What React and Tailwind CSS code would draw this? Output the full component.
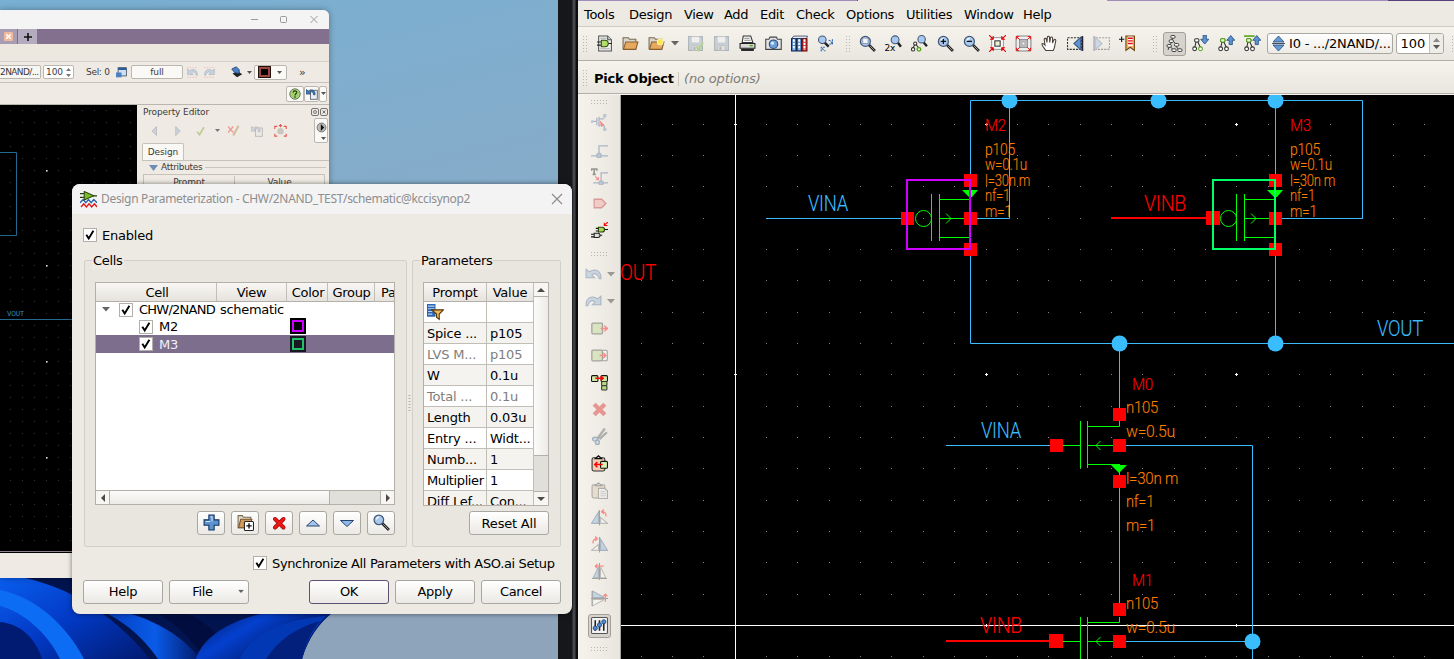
import React from "react";

/* ---------- small shared pieces ---------- */

function Ic({ children, size = 17, dim = false }) {
  return (
    <svg width={size} height={size} viewBox="0 0 16 16" className={dim ? "block shrink-0 opacity-40" : "block shrink-0"}>
      {children}
    </svg>
  );
}

function Cell({ children }) {
  return <div className="flex w-[26px] shrink-0 items-center justify-center">{children}</div>;
}

function Caret({ className = "" }) {
  return (
    <svg width="8" height="5" viewBox="0 0 8 5" className={"block shrink-0 " + className}>
      <path d="M0 0h8L4 4.6z" fill="#666462" />
    </svg>
  );
}

function Grip({ cols, rows }) {
  const dots = [];
  for (let c = 0; c < cols; c++)
    for (let r = 0; r < rows; r++) dots.push(<rect key={c + "-" + r} x={c * 3} y={r * 3} width="1" height="1" fill="#b9b6ae" />);
  return (
    <svg width={cols * 3 - 2} height={rows * 3 - 2} className="block shrink-0">
      {dots}
    </svg>
  );
}

function Check() {
  return (
    <span className="flex h-[14px] w-[14px] shrink-0 items-center justify-center border border-[#b3b0aa] bg-white">
      <svg width="12" height="12" viewBox="0 0 12 12">
        <path d="M2.3 5.8l2.4 3.6L9.4 1.8" fill="none" stroke="#000" strokeWidth="1.9" />
      </svg>
    </span>
  );
}

const glass = (x, y, r) => (
  <>
    <path d={`M${x + r * 0.7} ${y + r * 0.7}L15 15`} stroke="#222" strokeWidth="2.6" />
    <path d={`M${x + r * 0.7 + 1} ${y + r * 0.7 + 1}L14.6 14.6`} stroke="#aaa" strokeWidth="0.8" />
    <circle cx={x} cy={y} r={r} fill="#a9c8ec" stroke="#44597a" strokeWidth="1.2" />
    <path d={`M${x - r * 0.5} ${y - r * 0.1}a${r * 0.6} ${r * 0.6} 0 0 1 ${r * 0.6} -${r * 0.5}`} stroke="#fff" strokeWidth="1" fill="none" />
  </>
);

const tree = (leaf = "#333") => (
  <g fill="#fff" stroke="#333" strokeWidth="1">
    <path d="M4 5.5L2.5 12M5 5.5L8 12" fill="none" />
    <rect x="2.5" y="3.5" width="4" height="3" rx="1" />
    <circle cx="2.5" cy="13" r="1.8" />
    <circle cx="8" cy="13" r="1.8" stroke={leaf} />
  </g>
);

const folder = (
  <>
    <path d="M1 2.5h5l1 1.5h6v9H1z" fill="#d8d4cc" stroke="#7b6a50" />
    <path d="M3.5 6.5H15l-2 7H1.4z" fill="#e5a960" stroke="#8a5e2a" />
  </>
);

const floppy = (
  <>
    <path d="M1.5 1.5h13v13h-13z" fill="#8fa6c4" stroke="#4e6078" />
    <path d="M4 1.5h8v6H4z" fill="#eef2f8" stroke="#7686a0" strokeWidth="0.6" />
    <path d="M4.5 10h7v4.5h-7z" fill="#d0d4da" stroke="#666" strokeWidth="0.6" />
    <path d="M6 11h2v3H6z" fill="#667" />
  </>
);

/* four diagonal arrows, heads pointing at the middle */
const redArrowsIn = (
  <path d="M0 0l4 4M4 1v3H1M16 0l-4 4M12 1v3h3M0 16l4-4M1 12h3v3M16 16l-4-4M15 12h-3v3" stroke="#e00000" fill="none" />
);
/* four diagonal arrows, heads in the corners */
const redArrowsOut = (
  <path d="M4.500 4.500L1.500 1.500M1.500 4v-2.500h2.500M11.500 4.500l3-3M12 1.500h2.500v2.500M4.500 11.500l-3 3M1.500 12v2.500h2.500M11.500 11.500l3 3M14.500 12v2.500h-2.500" stroke="#f01010" strokeWidth=".9" fill="none" />
);

/* ---------- toolbar icons of the schematic window ---------- */

const fileIcons = {
  newDesign: (
    <Ic>
      <path d="M2.500 1h8.500l3.500 3.500V15h-12z" fill="#f1f1f1" stroke="#555" />
      <path d="M4 3h6M4 13h9" stroke="#aaa" />
      <path d="M11 1v3.500h3.500" fill="#ccc" stroke="#555" />
      <path d="M1 6.500h4M1 9.500h4M11 8h4" stroke="#222" />
      <path d="M5 5h3.500a3 3 0 0 1 0 6H5z" fill="#b4de6c" stroke="#2c4d0c" />
    </Ic>
  ),
  open: <Ic>{folder}</Ic>,
  openNew: (
    <Ic>
      {folder}
      <circle cx="11.500" cy="6.500" r="2.700" fill="#ffe44a" stroke="#fff2a0" />
    </Ic>
  ),
  print: (
    <Ic>
      <path d="M4 1h7l2 6H3z" fill="#fff" stroke="#333" />
      <path d="M5 3h5M5 5h6" stroke="#888" />
      <path d="M1 8h14v4.500H1z" fill="#d9d9d9" stroke="#222" />
      <path d="M2 14h12" stroke="#222" strokeWidth="2" />
      <path d="M10 10h3" stroke="#4fae1e" strokeWidth="1.500" />
    </Ic>
  ),
  camera: (
    <Ic>
      <path d="M.7 4h3l1-2h6l1 2h3.600v9.500H.7z" fill="#e3e3e3" stroke="#444" />
      <circle cx="8" cy="8.700" r="4" fill="#6d9fdc" stroke="#274a78" />
      <circle cx="7" cy="7.700" r="1.500" fill="#dcebfc" />
    </Ic>
  ),
  books: (
    <Ic>
      <path d="M.5 3.500l2-2.500h13l-1 2.500z" fill="#dfe9f5" stroke="#113" strokeWidth=".6" />
      <path d="M.5 3.500H5v11.500H.5zM5.500 3.500H10v11.500H5.500z" fill="#4d86cc" stroke="#10284c" />
      <path d="M10.500 3.500H15v11.500h-4.500z" fill="#e83030" stroke="#5a0808" />
      <path d="M2.700 4v10M7.700 4v10M12.700 4v10" stroke="#fff" strokeWidth="1.800" strokeDasharray="2.300 .9" />
    </Ic>
  ),
  findReplace: (
    <Ic>
      <path d="M7 7l4 4" stroke="#222" strokeWidth="2.400" />
      <circle cx="5" cy="4.500" r="3.600" fill="#a9c8ec" stroke="#44597a" />
      <path d="M11 5a3.500 3.500 0 0 1 3 3M14.500 4v4.500H11M4 15.500v-4h3.500M5 12.500a4 4 0 0 0 3 2.500" fill="none" stroke="#2d68b2" strokeDasharray="2 .7" />
    </Ic>
  ),
};

const viewIcons = [
  <Ic key="z1">{glass(6, 6, 4.7)}<path d="M3.500 3h5v5h-5z" fill="#fff" stroke="#667" strokeWidth=".6" opacity=".85" /></Ic>,
  <Ic key="z2">
    <path d="M12 7l3 4" stroke="#222" strokeWidth="2.400" />
    <circle cx="9.500" cy="4.500" r="3.700" fill="#a9c8ec" stroke="#44597a" />
    <text x="-.5" y="15.500" fontFamily="DejaVu Sans" fontSize="8.500" fill="#000">2x</text>
  </Ic>,
  <Ic key="z3">
    <path d="M12 7l3 3.500" stroke="#222" strokeWidth="2.200" />
    <circle cx="10" cy="4" r="3.500" fill="#a9c8ec" stroke="#44597a" />
    <path d="M4 8l-2.500 5M4 8l4 5" stroke="#333" />
    <circle cx="4" cy="8" r="1.500" fill="#fff" stroke="#333" />
    <circle cx="2" cy="13.500" r="1.600" fill="#fff" stroke="#333" />
    <circle cx="7.500" cy="13.500" r="1.700" fill="#e6ffd0" stroke="#55a516" strokeWidth="1.300" />
  </Ic>,
  <Ic key="z4">{glass(6, 6, 4.7)}<path d="M3.500 6h5M6 3.500v5" stroke="#111" strokeWidth="1.200" /></Ic>,
  <Ic key="z5">{glass(6, 6, 4.7)}<path d="M3.500 6h5" stroke="#111" strokeWidth="1.200" /></Ic>,
  <Ic key="z6">
    <rect x="2.500" y="2.500" width="11" height="11" fill="#fff" stroke="#999" />
    {redArrowsIn}
    <rect x="5.500" y="5.500" width="5" height="5" fill="#eaf5d8" stroke="#333" />
  </Ic>,
  <Ic key="z7">
    <rect x="1" y="1" width="14" height="14" rx="1" fill="#eee" stroke="#888" />
    <rect x="4.500" y="4.500" width="7" height="7" fill="#ddd" stroke="#777" />
    <rect x="6.500" y="6.500" width="3" height="3" fill="#fff" stroke="#999" />
    {redArrowsOut}
  </Ic>,
  <Ic key="hand">
    <path d="M4.500 14.500C3 12 1 10.500.8 8.500c.8-.8 1.800-.3 3 1L3 4c.4-1.200 1.700-1 2 0l.6 3L6 2c.3-1.100 1.700-1.100 2 0l.2 5 .8-4.500c.5-1 1.800-.7 1.900.3L10.800 7.500l1.400-3c.8-.8 1.900-.1 1.700 1L13 10c-.2 2-1 3.500-1.500 4.500z" fill="#fff" stroke="#4a4236" strokeWidth="1" />
  </Ic>,
  <Ic key="prev">
    <rect x=".5" y="2.500" width="13" height="11" fill="none" stroke="#333" strokeDasharray="2 1" />
    <path d="M13 2v12L6.500 8z" fill="#5e94d2" stroke="#35577f" />
    <path d="M14.500 1v14" stroke="#223" strokeWidth="1.600" />
  </Ic>,
  <Ic key="next" dim>
    <rect x="2.500" y="2.500" width="13" height="11" fill="none" stroke="#333" strokeDasharray="2 1" />
    <path d="M2 2v12l6.500-6z" fill="#9dbbe0" stroke="#607fa8" />
    <path d="M1 1v14" stroke="#668" strokeWidth="1.600" />
  </Ic>,
  <Ic key="mark">
    <path d="M0 4h5M2.500 1.500v5" stroke="#111" />
    <path d="M6.500 1h8v13.500l-4-3-4 3z" fill="#eeb45c" stroke="#6b4512" />
    <path d="M8.500 1.500h4.500v9H8.500z" fill="#fff" />
    <path d="M8.500 3H13M8.500 5.500H13M8.500 8H13" stroke="#e01010" strokeWidth="1.300" />
  </Ic>,
];

const treeIcon = (
  <Ic>
    <g stroke="#333" fill="#fff" strokeWidth=".9">
      <path d="M6 3v3L3 10M7 6l3 3M3 10l-1 4M9 10l3 4M4 11l3 3" fill="none" />
      <rect x="4.500" y=".5" width="4" height="2.500" rx="1" />
      <rect x="3" y="4.500" width="4" height="2.500" rx="1" />
      <rect x="8" y="8" width="4" height="2.500" rx="1" />
      <rect x="1" y="9" width="4" height="2.500" rx="1" />
      <rect x="5.500" y="13" width="4" height="2.500" rx="1" />
      <rect x="11" y="13" width="4" height="2.500" rx="1" />
    </g>
  </Ic>
);
const descendIcon = (
  <Ic>
    {tree("#55a516")}
    <path d="M10.500 0h3v4h2.300L12 8.500 8.200 4h2.300z" fill="#5c93d4" stroke="#294f80" strokeWidth=".8" />
  </Ic>
);
const ascendIcon = (
  <Ic>
    {tree()}
    <rect x="2.500" y="3.500" width="4" height="3" rx="1" fill="#e6ffd0" stroke="#55a516" />
    <path d="M12 .5L15.800 5h-2.300v4h-3V5H8.200z" fill="#5c93d4" stroke="#294f80" strokeWidth=".8" />
  </Ic>
);
const topIcon = (
  <Ic>
    {tree()}
    <path d="M0 1h10" stroke="#55a516" strokeWidth="1.500" />
    <rect x="2.500" y="3.500" width="4" height="3" rx="1" fill="#e6ffd0" stroke="#55a516" />
    <path d="M12 .5L15.800 5h-2.300v4h-3V5H8.200z" fill="#5c93d4" stroke="#294f80" strokeWidth=".8" />
  </Ic>
);

/* ---------- vertical tool palette ---------- */

const drawTools = [
  <Ic key="inst" dim>
    <path d="M1 7h4M5.500 3.500v7M7.500 2.500v9.500M7.500 4.500H12M7.500 10.500H12M12.500 1v3M12.500 11v4" fill="none" stroke="#4a6594" strokeWidth="1.200" />
    <rect x="11.500" y="0" width="3" height="3" fill="#6f8fc0" />
    <rect x="0" y="6" width="2" height="2.500" fill="#6f8fc0" />
    <rect x="11.500" y="13" width="3" height="3" fill="#6f8fc0" />
    <path d="M9 7.500l3 3-2 1z" fill="#f00" stroke="#f00" />
  </Ic>,
  <Ic key="wire" dim>
    <path d="M0 14h16M7.500 14V4.500H16" fill="none" stroke="#4a6594" strokeWidth="1.200" />
    <circle cx="7.500" cy="13.700" r="2.200" fill="#6f8fc0" stroke="#4a6594" />
  </Ic>,
  <Ic key="label" dim>
    <path d="M.5 2.500V1h5v1.500M3 1v5M1.500 6h3" fill="none" stroke="#111" strokeWidth="1.500" />
    <path d="M4 8l3 3M7 8.500V11H4.500" fill="none" stroke="#f00" />
    <path d="M2 14h14M9.500 14V4.500H16" fill="none" stroke="#4a6594" strokeWidth="1.200" />
    <circle cx="9.500" cy="14" r="2" fill="#6f8fc0" stroke="#4a6594" />
  </Ic>,
  <Ic key="pin" dim>
    <path d="M3 4h7l4 4-4 4H3z" fill="#f49a9a" stroke="#b82222" strokeWidth="1.200" />
  </Ic>,
  <Ic key="probe">
    <path d="M0 11.500h3M0 14h3M8.500 12.500h2" stroke="#111" />
    <path d="M3 10.500h3.500a2 2 0 0 1 0 4H3z" fill="#ddd" stroke="#222" />
    <path d="M4.500 6h3M4.500 8.500h3M12 7h4" stroke="#111" />
    <path d="M7 5h3.500a2.200 2.200 0 0 1 0 4.400H7z" fill="#a9d65a" stroke="#25400a" />
    <path d="M16 0l-3.500 3M12.500.8v2.500h3" fill="none" stroke="#f00" />
  </Ic>,
];

const undoPath = "M1 3v8h8L6.5 8.5C9 6 12 7 13.5 12h1.5C15.500 5 10 1.500 4 5.500z";
const block = <rect x=".8" y="3" width="10" height="10" rx="1" fill="#b6d98a" stroke="#333" strokeWidth="1.200" />;
const tri = (
  <>
    <path d="M7 3v10.500H.5z" fill="#86aedb" stroke="#3d5f8a" />
    <path d="M9 13.500V8l6.500 5.500z" fill="#fff" stroke="#777" />
    <path d="M8 1v14.500" stroke="#333" />
  </>
);

const editTools = [
  <Ic key="push" dim>{block}<path d="M9 8h6M12.500 5.500L15.500 8l-3 2.500" fill="none" stroke="#f00" strokeWidth="1.300" /></Ic>,
  <Ic key="in" dim>
    {block}
    <rect x="10.800" y="3" width="4.500" height="10" rx="1" fill="#fff" stroke="#333" />
    <path d="M8 8h6M11.500 5.500L14 8l-2.500 2.500" fill="none" stroke="#f00" strokeWidth="1.300" />
  </Ic>,
  <Ic key="copy">
    <rect x=".5" y="1.500" width="6" height="5.500" rx="1" fill="#cfe8a8" stroke="#111" />
    <rect x="9.500" y="1.500" width="6" height="5.500" rx="1" fill="#cfe8a8" stroke="#111" />
    <rect x="10" y="7" width="5" height="4" rx="1" fill="#b5dc78" stroke="#333" />
    <rect x="10" y="11" width="5" height="4" rx="1" fill="#b5dc78" stroke="#333" />
    <path d="M4 4h7M9 2l2.500 2L9 6" fill="none" stroke="#f00" strokeWidth="1.300" />
  </Ic>,
  <Ic key="del" dim><path d="M3 3l10 10M13 3L3 13" stroke="#dc1414" strokeWidth="4" /></Ic>,
  <Ic key="cut" dim>
    <path d="M13 .5L6 10M15 4L8 10.500" stroke="#555" strokeWidth="2.200" />
    <ellipse cx="4" cy="10.500" rx="2.500" ry="1.800" fill="#b8cbe4" stroke="#2d5388" strokeWidth="1.300" />
    <ellipse cx="6" cy="13.500" rx="1.800" ry="2.200" fill="#b8cbe4" stroke="#2d5388" strokeWidth="1.300" />
  </Ic>,
  <Ic key="paste">
    <rect x="1" y="2.500" width="12" height="12.500" rx="1.500" fill="#f0cdb4" stroke="#333" />
    <path d="M4 3.500L7 .8l3 2.700z" fill="#ddd" stroke="#111" strokeWidth="1.200" />
    <rect x="9" y="6" width="6.500" height="6.500" rx="1" fill="#d7efb0" stroke="#111" />
    <path d="M11 9H3.500M6 6.500L3.500 9 6 11.500" fill="none" stroke="#f00" strokeWidth="1.400" />
  </Ic>,
  <Ic key="paste2" dim>
    <rect x="1" y="2.500" width="12" height="12.500" rx="1.500" fill="#dcc3aa" stroke="#444" />
    <path d="M4 3.500L7 .8l3 2.700z" fill="#ccc" stroke="#333" />
    <path d="M7 6h6l2.500 2.500v7H7z" fill="#eee" stroke="#555" />
    <path d="M9 9h4M9 11h5M9 13h5" stroke="#889" strokeWidth=".8" />
  </Ic>,
  <Ic key="rotl" dim>{tri}<path d="M14 7c.5-3-1-4.500-4-4.500M12 .5L10 2.500l2 2" fill="none" stroke="#f00" strokeWidth="1.300" /></Ic>,
  <Ic key="rotr" dim>
    <path d="M9 3v10.500h6.500z" fill="#86aedb" stroke="#3d5f8a" />
    <path d="M7 13.500V8L.5 13.500z" fill="#fff" stroke="#777" />
    <path d="M8 1v14.500" stroke="#333" />
    <path d="M2 7C1.500 4 3 2.500 6 2.500M4 .5l2 2-2 2" fill="none" stroke="#f00" strokeWidth="1.300" />
  </Ic>,
  <Ic key="fliph" dim>
    <path d="M7 4v10H2z" fill="#86aedb" stroke="#3d5f8a" />
    <path d="M9 4v10h5z" fill="#fff" stroke="#777" />
    <path d="M8 0v16M1 14.500h14" stroke="#333" />
    <path d="M12 3H4M6 1L4 3l2 2" fill="none" stroke="#f00" strokeWidth="1.200" />
  </Ic>,
  <Ic key="flipv" dim>
    <path d="M1.500 1v6h11z" fill="#86aedb" stroke="#3d5f8a" />
    <path d="M1.500 15V9h11z" fill="#fff" stroke="#777" />
    <path d="M0 8h16M1 1v14" stroke="#333" />
    <path d="M13.500 11V4M11.500 6l2-2 2 2" fill="none" stroke="#f00" strokeWidth="1.200" />
  </Ic>,
];

function Palette() {
  return (
    <div className="flex w-[43px] shrink-0 flex-col items-center overflow-hidden border-r border-[#a6a49e] bg-[linear-gradient(90deg,#f6f3ed,#e9e6df)]">
      <div className="flex h-[14px] shrink-0 items-center justify-center"><Grip cols={6} rows={2} /></div>
      {drawTools.map((t, i) => (
        <div key={i} className="flex h-[27px] shrink-0 items-center">{t}</div>
      ))}
      <div className="flex h-[17px] shrink-0 items-center justify-center pt-[2px]"><Grip cols={6} rows={2} /></div>
      {["", "scale(-1,1) translate(-16,0)"].map((tr) => (
        <div key={tr} className="flex h-[27px] w-full shrink-0 items-center pl-[7px]">
          <Ic dim><path d={undoPath} transform={tr} fill="#8fb0d8" stroke="#44648c" /></Ic>
          <Caret className="ml-[5px] opacity-60" />
        </div>
      ))}
      {editTools.map((t, i) => (
        <div key={i} className="flex h-[27px] shrink-0 items-center">{t}</div>
      ))}
      <div className="flex h-[27px] shrink-0 items-center">
        <div className="flex h-[24px] w-[23px] items-center justify-center rounded-[3px] border border-[#a19f98] bg-[#d5d3cc]">
          <Ic>
            <rect x=".5" y=".5" width="15" height="15" rx="1" fill="#f3f3f3" stroke="#555" />
            <path d="M4 3v10M8 3v10M12 3v10" stroke="#222" strokeWidth="1.500" />
            <circle cx="4" cy="10.500" r="2" fill="#4c8bd4" stroke="#16396a" strokeWidth=".7" />
            <circle cx="8" cy="7.500" r="2" fill="#4c8bd4" stroke="#16396a" strokeWidth=".7" />
            <circle cx="12" cy="4.500" r="2" fill="#4c8bd4" stroke="#16396a" strokeWidth=".7" />
          </Ic>
        </div>
      </div>
      <div className="flex h-[20px] shrink-0 items-center justify-center"><Grip cols={6} rows={2} /></div>
    </div>
  );
}

/* ---------- schematic drawing ---------- */

const BLUE = "#3abdff";
const RED = "#ff0000";
const GREEN = "#00ff00";
const ORANGE = "#ff8000";

function T({ x, x2, y, c, s = 16.5, children }) {
  return (
    <text
      x={x}
      y={y}
      fill={c}
      stroke={c}
      strokeWidth="0.1"
      fontSize={s}
      fontFamily="Roboto"
      fontWeight="300"
      textLength={x2 - x}
      lengthAdjust="spacingAndGlyphs"
    >
      {children}
    </text>
  );
}

function Sq({ x, y, w = 13 }) {
  return <rect x={x} y={y} width={w} height={w} fill={RED} />;
}

function Pmos({ dx, name, outline, wide }) {
  return (
    <g>
      <g transform={`translate(${dx} 0)`}>
        <Sq x={964} y={174} />
        <Sq x={964} y={212} />
        <Sq x={964} y={243} />
        <g stroke={GREEN} fill="none">
          <circle cx="923.500" cy="218.500" r="8" />
          <path d="M931.500 194v47M939.500 194v47M939 199.500h31M939 218.500h25M939 237.500h31M946 213.500l5 5-5 5" />
        </g>
        <path d="M962 190h16l-6 7h-3z" fill={GREEN} />
      </g>
      {wide ? <Sq x={1206} y={211} w={14} /> : <Sq x={901} y={212} />}
      <rect x={wide ? 1213 : 907} y="180" width={wide ? 62 : 63} height="69" fill="none" stroke={outline} strokeWidth="2" />
      <T x={985 + dx} x2={1006 + dx} y={131} c={RED} s={17}>{name}</T>
      <T x={985 + dx} x2={1015 + dx} y={155} c={ORANGE}>p105</T>
      <T x={985 + dx} x2={1027 + dx} y={170} c={ORANGE}>w=0.1u</T>
      <T x={985 + dx} x2={1030 + dx} y={186} c={ORANGE}>l=30n m</T>
      <T x={985 + dx} x2={1010 + dx} y={201} c={ORANGE}>nf=1</T>
      <T x={985 + dx} x2={1012 + dx} y={217} c={ORANGE}>m=1</T>
    </g>
  );
}

function Nmos({ dy, name }) {
  return (
    <g>
      <g transform={`translate(0 ${dy})`}>
        <g stroke={GREEN} fill="none">
          <path d="M1063 445.500h17M1080.500 421v47M1087.500 421v47M1088 426.500h31.500V421M1088 445.500h25M1088 464.500h32M1100.500 441l-4.500 4.500 4.500 4.500" />
        </g>
        <path d="M1111 465h16l-8 8zM1119 470h1v5h-1z" fill={GREEN} />
        <Sq x={1113} y={dy ? 407 : 408} />
        <Sq x={1113} y={439} />
        <Sq x={1113} y={475} />
      </g>
      <T x={1132} x2={1153} y={390 + dy} c={RED} s={17}>{name}</T>
      <T x={1126} x2={1158} y={413 + dy} c={ORANGE} s={17}>n105</T>
      <T x={1126} x2={1175} y={437 + dy} c={ORANGE} s={17}>w=0.5u</T>
    </g>
  );
}

function Schematic() {
  const dots = [];
  for (let i = -11; i <= 14; i++) {
    for (let j = 0; j <= 17; j++) {
      const x = Math.floor(986 + 31.35 * i);
      const y = Math.floor(124 + 31.35 * j);
      if (i % 8 === 0 && j % 8 === 0)
        dots.push(<path key={i + "." + j} d={`M${x - 1} ${y}h3v1h-3zM${x} ${y - 1}h1v3h-1z`} fill="#fff" />);
      else dots.push(<rect key={i + "." + j} x={x} y={y} width="1" height="1" fill="#80809c" />);
    }
  }
  return (
    <svg width="833" height="564" viewBox="621 95 833 564" className="block shrink-0 bg-black">
      {dots}
      <path d="M735.500 95v564M621 625.500h833" stroke="#fff" />
      <path
        d="M970.500 343V100.500H1362.500V218.500H1282M1009.500 100v118.500H977M766 218.500h136M970.500 250v93.500H1454M1275.500 100v243M1119.500 343v65M1119.500 488v116M946 445.500h104M1126 445.500h126.500V659M1126 641.500h126"
        fill="none"
        stroke={BLUE}
      />
      <path d="M1111 218h96M946 641h104" stroke={RED} strokeWidth="2" />
      {[[1009.5, 100.5], [1158.5, 100.5], [1275.5, 100.5], [1119.5, 343.5], [1275.5, 343.5], [1252.5, 641.5]].map(([x, y]) => (
        <circle key={x + "-" + y} cx={x} cy={y} r="8" fill={BLUE} />
      ))}
      <Pmos dx={0} name="M2" outline="#d000ff" />
      <Pmos dx={305} name="M3" outline="#00ff66" wide />
      <Nmos dy={0} name="M0" />
      <Nmos dy={196} name="M1" />
      <Sq x={1050} y={439} />
      <Sq x={1049} y={634} w={14} />
      <T x={1126} x2={1178} y={484} c={ORANGE} s={17}>l=30n m</T>
      <T x={1126} x2={1154} y={507} c={ORANGE} s={17}>nf=1</T>
      <T x={1126} x2={1155} y={531} c={ORANGE} s={17}>m=1</T>
      <T x={808} x2={848} y={211} c={BLUE} s={22}>VINA</T>
      <T x={1144} x2={1186} y={211} c={RED} s={22}>VINB</T>
      <T x={1377} x2={1423} y={336} c={BLUE} s={22}>VOUT</T>
      <T x={620} x2={656} y={280} c={RED} s={22}>OUT</T>
      <T x={981} x2={1021} y={438} c={BLUE} s={22}>VINA</T>
      <T x={980} x2={1022} y={633} c={RED} s={22}>VINB</T>
    </svg>
  );
}

/* ---------- schematic editor window ---------- */

function Editor() {
  return (
    <section className="flex w-[876px] shrink-0 flex-col bg-[#edeae3] text-[13px] tracking-[-0.3px] text-black">
      <div className="flex h-px shrink-0">
        <div className="w-[280px] border-r border-[#5c4676] bg-[#a18db9]" />
        <div className="w-[249px]" />
        <div className="w-[281px] bg-[#a18db9]" />
        <div className="flex-1 bg-[#57407a]" />
      </div>
      <nav className="flex h-[26px] shrink-0 items-center border-b border-[#cfccc6] pt-px pl-[6px] whitespace-nowrap">
        <span className="w-[45px]">Tools</span>
        <span className="w-[55px]">Design</span>
        <span className="w-[40px]">View</span>
        <span className="w-[36px]">Add</span>
        <span className="w-[36px]">Edit</span>
        <span className="w-[50px]">Check</span>
        <span className="w-[60px]">Options</span>
        <span className="w-[58px]">Utilities</span>
        <span className="w-[59px]">Window</span>
        <span>Help</span>
      </nav>
      <div className="flex h-[34px] shrink-0 items-center overflow-hidden border-b border-[#b3b0aa] bg-[linear-gradient(#f6f3ed,#e9e6df)]">
        <div className="flex w-[13px] shrink-0 justify-center"><Grip cols={2} rows={6} /></div>
        <Cell>{fileIcons.newDesign}</Cell>
        <Cell>{fileIcons.open}</Cell>
        <Cell>{fileIcons.openNew}</Cell>
        <div className="flex w-[13px] shrink-0 justify-center pr-px"><Caret /></div>
        <Cell><Ic dim>{floppy}<path d="M9 11l2 3 4-7" fill="none" stroke="#5db010" strokeWidth="2" /></Ic></Cell>
        <Cell><Ic dim>{floppy}</Ic></Cell>
        <Cell>{fileIcons.print}</Cell>
        <Cell>{fileIcons.camera}</Cell>
        <Cell>{fileIcons.books}</Cell>
        <Cell>{fileIcons.findReplace}</Cell>
        <div className="flex w-[16px] shrink-0 justify-end pr-[4px]"><Grip cols={2} rows={6} /></div>
        {viewIcons.map((ic, i) => <Cell key={i}>{ic}</Cell>)}
        <div className="flex w-[23px] shrink-0 justify-end pr-[6px]"><Grip cols={2} rows={6} /></div>
        <div className="mr-px flex h-[24px] w-[23px] shrink-0 items-center justify-center rounded-[3px] border border-[#a19f98] bg-[#d5d3cc]">{treeIcon}</div>
        <Cell>{descendIcon}</Cell>
        <Cell>{ascendIcon}</Cell>
        <Cell>{topIcon}</Cell>
        <div className="ml-[2px] flex h-[21px] w-[126px] shrink-0 items-center rounded-[3px] border border-[#a9a7a1] bg-[linear-gradient(#ffffff,#edebe6)] pl-[4px] tracking-[-0.2px] whitespace-nowrap">
          <svg width="13" height="15" viewBox="0 0 13 15" className="mr-[4px] shrink-0">
            <path d="M6.500 0L12 6H1z" fill="#6698d2" stroke="#234a7c" strokeWidth=".8" />
            <path d="M6.500 15L12 9H1z" fill="#6698d2" stroke="#234a7c" strokeWidth=".8" />
            <path d="M0 7.500h13" stroke="#123" strokeWidth=".8" />
          </svg>
          I0 - .../2NAND/...
        </div>
        <div className="ml-[3px] flex h-[21px] w-[48px] shrink-0 items-center overflow-hidden rounded-[3px] border border-[#a9a7a1] bg-white">
          <span className="w-[32px] text-center tracking-normal">100</span>
          <span className="flex h-full flex-1 flex-col items-center justify-center gap-[3px] border-l border-[#c2c0ba] bg-[#eeece7]">
            <svg width="7" height="4"><path d="M0 4h7L3.500 0z" fill="#888" /></svg>
            <svg width="7" height="4"><path d="M0 0h7L3.500 4z" fill="#555" /></svg>
          </span>
        </div>
        <div className="ml-[8px]"><Grip cols={1} rows={6} /></div>
      </div>
      <div className="flex h-[33px] shrink-0 items-center border-b border-[#b3b0aa] bg-[linear-gradient(#f6f3ed,#e9e6df)] pt-[3px]">
        <div className="flex w-[16px] justify-center pr-[3px] pb-px"><Grip cols={2} rows={6} /></div>
        <b className="w-[84px] tracking-[-0.25px] whitespace-nowrap">Pick Object</b>
        <span className="h-[14px] w-px bg-[#cbc8c2]" />
        <i className="ml-[5px] tracking-[-0.15px] text-[#7d7b76]">(no options)</i>
      </div>
      <div className="h-px shrink-0 bg-[#f6f3ed]" />
      <div className="flex min-h-0 flex-1">
        <Palette />
        <Schematic />
      </div>
    </section>
  );
}

/* ---------- parameterization dialog ---------- */

function Btn({ w, children, focus }) {
  return (
    <button
      className={
        "flex h-[24px] shrink-0 items-center justify-center rounded-[3px] border bg-[linear-gradient(#ffffff,#ebe9e5)] pb-px whitespace-nowrap " +
        w +
        (focus ? " border-[#5f5173]" : " border-[#a9a7a1]")
      }
    >
      {children}
    </button>
  );
}

const head = "flex shrink-0 items-center justify-center border-r border-[#c1beb8] overflow-hidden";

function Swatch({ color, bg }) {
  return (
    <span className={"flex h-[16px] w-[16px] items-center justify-center " + bg}>
      <span className={"h-[12px] w-[12px] border-2 " + color} />
    </span>
  );
}

function CellsGroup() {
  return (
    <div className="relative h-[287px] w-[323px] shrink-0 rounded-[2px] border border-[#d2cfc9] bg-[#e9e6df] pt-[21px] pl-[10px]">
      <span className="absolute -top-[9px] left-[7px] bg-[#edeae3] px-px leading-[17px]">Cells</span>
      <div className="flex h-[223px] w-[300px] flex-col border border-[#b3b0aa] bg-white">
        <div className="flex h-[19px] shrink-0 overflow-hidden border-b border-[#b3b0aa] bg-[linear-gradient(#f8f7f4,#e6e3de)] whitespace-nowrap">
          <div className={head + " w-[121px] pl-[2px]"}>Cell</div>
          <div className={head + " w-[70px]"}>View</div>
          <div className={head + " w-[41px] pl-[2px]"}>Color</div>
          <div className={head + " w-[47px] pl-px"}>Group</div>
          <div className="flex items-center pl-[6px]">Parameter</div>
        </div>
        <div className="flex h-[16px] shrink-0 items-center pb-px pl-[6px] whitespace-nowrap">
          <Caret className="mr-[9px]" />
          <Check />
          <span className="ml-[6px] w-[81px] tracking-[-0.75px]">CHW/2NAND</span>
          <span>schematic</span>
        </div>
        <div className="flex h-[17px] shrink-0 items-center pl-[43px]">
          <Check />
          <span className="ml-[6px] w-[131px]">M2</span>
          <span className="-mt-px"><Swatch color="border-[#cc00ff]" bg="bg-black" /></span>
        </div>
        <div className="flex h-[18px] shrink-0 items-center bg-[#7e6e8e] pl-[43px] text-[#f2eff5]">
          <Check />
          <span className="ml-[6px] w-[131px]">M3</span>
          <Swatch color="border-[#1fc264]" bg="bg-[#1a1624]" />
        </div>
        <div className="flex-1" />
        <div className="flex h-[14px] shrink-0 border-t border-[#b3b0aa] bg-[#e1dfda]">
          <div className="flex w-[14px] items-center justify-center border-r border-[#b3b0aa] bg-[#f7f6f3]">
            <svg width="4" height="8"><path d="M4 0v8L0 4z" fill="#4c4a48" /></svg>
          </div>
          <div className="w-[220px] border-r border-[#b3b0aa] bg-[linear-gradient(#fbfbfa,#edebe7)]" />
          <div className="flex-1" />
          <div className="flex w-[14px] items-center justify-center border-l border-[#b3b0aa] bg-[#f7f6f3]">
            <svg width="4" height="8"><path d="M0 0v8l4-4z" fill="#4c4a48" /></svg>
          </div>
        </div>
      </div>
      <div className="mt-[6px] flex w-[300px] justify-end gap-[6px]">
        <Btn w="w-[28px]"><Ic><path d="M5.500 1h5v4.500H15v5h-4.500V15h-5v-4.500H1v-5h4.500z" fill="#5a92d2" stroke="#15335c" /><path d="M7 2.500h1.500V7M2.500 7H7" stroke="#cfe3f9" fill="none" /></Ic></Btn>
        <Btn w="w-[28px]">
          <Ic>
            <path d="M1 1.500h4l1 1.500h7v10H1z" fill="#e3dccf" stroke="#7b6a50" />
            <path d="M3.500 5H14l-2 8H1.400z" fill="#cf9a5a" stroke="#7a5427" />
            <rect x="7" y="7" width="8.500" height="8.500" rx="1" fill="#fff" stroke="#222" />
            <path d="M11.300 8.700v5M8.800 11.200h5" stroke="#111" strokeWidth="1.300" />
          </Ic>
        </Btn>
        <Btn w="w-[28px]"><Ic size={16}><path d="M4 4l8.500 8.500M12.500 4L4 12.500" stroke="#8e0606" strokeWidth="4" strokeLinecap="round" /><path d="M4 4l8.500 8.500M12.500 4L4 12.500" stroke="#ee1515" strokeWidth="2.800" strokeLinecap="round" /></Ic></Btn>
        <Btn w="w-[28px]"><Ic size={16}><path d="M1.500 11L8 5l6.500 6z" fill="#a4c6ee" stroke="#26446e" /></Ic></Btn>
        <Btn w="w-[28px]"><Ic size={16}><path d="M1.500 5.500L8 11.500l6.500-6z" fill="#8db8ea" stroke="#26446e" /></Ic></Btn>
        <Btn w="w-[28px]"><Ic>{glass(5.5, 5.5, 4.5)}</Ic></Btn>
      </div>
    </div>
  );
}

const params = [
  ["Spice ...", "p105", false],
  ["LVS M...", "p105", true],
  ["W", "0.1u", false],
  ["Total ...", "0.1u", true],
  ["Length", "0.03u", false],
  ["Entry ...", "Widt...", false],
  ["Numb...", "1", false],
  ["Multiplier", "1", false],
  ["Diff Lef...", "Con...", false],
];

function ParamsGroup() {
  return (
    <div className="relative h-[287px] w-[149px] shrink-0 rounded-[2px] border border-[#d2cfc9] bg-[#e9e6df] pt-[21px] pl-[10px]">
      <span className="absolute -top-[9px] left-[7px] bg-[#edeae3] px-px leading-[17px]">Parameters</span>
      <div className="flex h-[224px] w-[126px] overflow-hidden border border-[#b3b0aa] bg-white tracking-[-0.2px] whitespace-nowrap">
        <div className="flex w-[110px] shrink-0 flex-col">
          <div className="flex h-[19px] shrink-0 border-b border-[#b3b0aa] bg-[linear-gradient(#f8f7f4,#e6e3de)]">
            <div className={head + " w-[63px]"}>Prompt</div>
            <div className={head + " w-[47px]"}>Value</div>
          </div>
          <div className="flex h-[21px] shrink-0 border-b border-[#c1beb8]">
            <div className="flex w-[63px] items-center border-r border-[#c1beb8] pl-[3px]">
              <Ic>
                <rect x="0" y="0" width="8" height="12" fill="#2c66b0" />
                <path d="M1 2h6M1 4.500h6M1 7h4M1 9.500h4" stroke="#bcd3f0" />
                <path d="M4.500 5.500h11L11.500 9.500v5l-2.500-2v-3z" fill="#f4b95a" stroke="#4e330b" />
              </Ic>
            </div>
            <div className="w-[47px] border-r border-[#c1beb8]" />
          </div>
          {params.map(([k, v, off], i) => (
            <div key={k} className={"flex h-[21px] shrink-0 items-center border-b border-[#c1beb8] " + (i % 2 ? "bg-white " : "bg-[#f4f3f0] ") + (off ? "text-[#7f7d79]" : "")}>
              <div className={"flex h-full w-[63px] items-center border-r border-[#c1beb8] pl-[3px]" + (k === "Multiplier" ? " tracking-[-0.4px]" : "")}>{k}</div>
              <div className="flex h-full w-[47px] items-center border-r border-[#c1beb8] pl-[3px]">{v}</div>
            </div>
          ))}
        </div>
        <div className="flex flex-1 flex-col bg-[#e1dfda]">
          <div className="flex h-[14px] shrink-0 items-center justify-center border-b border-[#b3b0aa] bg-[#f7f6f3]">
            <svg width="8" height="4"><path d="M0 4h8L4 0z" fill="#4c4a48" /></svg>
          </div>
          <div className="h-[159px] border-b border-[#b3b0aa] bg-[linear-gradient(90deg,#fbfbfa,#edebe7)]" />
          <div className="flex-1" />
          <div className="flex h-[14px] shrink-0 items-center justify-center border-t border-[#b3b0aa] bg-[#f7f6f3]">
            <svg width="8" height="4"><path d="M0 0h8L4 4z" fill="#4c4a48" /></svg>
          </div>
        </div>
      </div>
      <div className="mt-[5px] flex w-[126px] justify-end"><Btn w="w-[80px]"><span className="pt-px tracking-[-0.2px]">Reset All</span></Btn></div>
    </div>
  );
}

function Dialog() {
  return (
    <div className="absolute top-[184px] left-[72px] flex h-[430px] w-[500px] flex-col overflow-hidden rounded-[8px] bg-[#edeae3] text-[13px] tracking-[-0.3px] text-black shadow-[0_0_5px_rgba(0,0,0,0.5)]">
      <div className="flex h-[30px] shrink-0 items-center bg-[#f3f3f3] pl-[8px]">
        <Ic>
          <path d="M0 11l3-3 2.500 3L8 8l2.500 3L13 8l3 3" fill="none" stroke="#2b66ac" strokeWidth="1.300" />
          <path d="M1 15l2.500-3L6 15l2.500-3 2.500 3 2.500-3L16 15" fill="none" stroke="#e01818" strokeWidth="1.300" />
          <path d="M0 2.500h4M0 6h4M12 4.500h4" stroke="#243f10" strokeWidth="1.200" />
          <path d="M4 .5l9 4-9 4z" fill="#7cbb2a" stroke="#2b4c0c" />
        </Ic>
        <span className="ml-[4px] w-[372px] font-['Noto_Sans'] text-[12px] tracking-[-0.325px] whitespace-nowrap text-[#8e8e8e]">
          Design Parameterization - CHW/2NAND_TEST/schematic@kccisynop2
        </span>
        <svg width="12" height="12" className="mr-[9px] ml-auto"><path d="M1 1l10 10M11 1L1 11" stroke="#8a8a8a" strokeWidth="1.100" /></svg>
      </div>
      <div className="mt-[14px] flex h-[14px] shrink-0 items-center pl-[11px]">
        <Check /><span className="ml-[5px] tracking-[-0.2px]">Enabled</span>
      </div>
      <div className="mt-[18px] flex shrink-0 items-center pl-[12px]">
        <CellsGroup />
        <div className="flex w-[5px] shrink-0 justify-center">
          <svg width="3" height="18"><path d="M1.500 0v18" stroke="#b3b0aa" strokeWidth="2" strokeDasharray="1 2" /></svg>
        </div>
        <ParamsGroup />
      </div>
      <div className="mt-[9px] flex h-[14px] shrink-0 items-center justify-end pr-[16px] whitespace-nowrap">
        <Check /><span className="ml-[5px] w-[284px] tracking-[-0.36px]">Synchronize All Parameters with ASO.ai Setup</span>
      </div>
      <div className="mt-[10px] flex gap-[6px] pl-[11px]">
        <Btn w="w-[80px]">Help</Btn>
        <Btn w="w-[80px]"><span className="ml-[7px] w-[45px] text-center">File</span><Caret className="ml-[12px] scale-75" /></Btn>
        <div className="w-[48px]" />
        <Btn w="w-[80px]" focus>OK</Btn>
        <Btn w="w-[80px]">Apply</Btn>
        <Btn w="w-[80px]">Cancel</Btn>
      </div>
    </div>
  );
}

/* ---------- partly covered editor window behind the dialog ---------- */

function MiniCanvas() {
  const dots = [];
  for (let i = 0; i < 11; i++)
    for (let j = 0; j < 37; j++) {
      const major = i === 3 && j % 8 === 5;
      dots.push(<rect key={i + "-" + j} x={10 + i * 12} y={5 + Math.round(j * 11.95)} width={major ? 1.6 : 1} height={major ? 1.6 : 1} fill={major ? "#ddd" : "#34343c"} />);
    }
  return (
    <svg width="137" height="448" className="block shrink-0 bg-black">
      {dots}
      <path d="M0 47.500h16.500v83H0M0 214.500h137" fill="none" stroke="#246a8c" />
      <text x="7" y="211" fontSize="8" fontFamily="Roboto" fill="#3391bd" textLength="17" lengthAdjust="spacingAndGlyphs">VOUT</text>
      <path d="M0 446.500h137" stroke="#8c7f8c" />
    </svg>
  );
}

function BackWindow() {
  return (
    <div className="absolute top-[10px] left-0 flex h-[568px] w-[329px] flex-col overflow-hidden rounded-tr-[6px] bg-[#efebe4] text-[9px] tracking-[-0.1px] text-[#3c3a38] shadow-[0_0_6px_rgba(0,0,0,0.35)]">
      <div className="flex h-[19px] shrink-0 items-center justify-end bg-[#f4f4f4] pr-[11px]">
        <svg width="68" height="9" fill="none" stroke="#9a9a9a"><path d="M1 4.500h7" /><rect x="30.500" y="1.500" width="6" height="6" rx="1" /><path d="M60.500 1l7 7M67.500 1l-7 7" /></svg>
      </div>
      <div className="flex h-[15px] shrink-0 bg-[#82708e]">
        <div className="flex w-[18px] items-center justify-center border-r border-[#7a6b88] bg-[#a99db4]">
          <span className="flex h-[9px] w-[9px] items-center justify-center rounded-[1px] bg-[#efb99c]"><svg width="5" height="5"><path d="M0 0l5 5M5 0L0 5" stroke="#fff" strokeWidth="1.400" /></svg></span>
        </div>
        <div className="flex w-[19px] items-center justify-center bg-[#b5abbe]"><svg width="8" height="8"><path d="M4 0v8M0 4h8" stroke="#111" strokeWidth="1.600" /></svg></div>
      </div>
      <div className="h-[18px] shrink-0 border-b border-[#d5d1ca] bg-[#ece8e0]" />
      <div className="flex h-[21px] shrink-0 items-center border-b border-[#c5c2bb] whitespace-nowrap">
        <div className="flex h-[14px] w-[41px] items-center rounded-r-[2px] border border-l-0 border-[#bab7b0] bg-[#f8f6f2] tracking-[-0.6px]">2NAND/...</div>
        <div className="ml-[2px] flex h-[14px] w-[31px] items-center rounded-[2px] border border-[#bab7b0] bg-white pl-[2px]">
          100
          <svg width="6" height="9" className="mr-px ml-auto"><path d="M0 3h5L2.500 0zM0 6h5L2.500 9z" fill="#777" /></svg>
        </div>
        <span className="ml-[12px] w-[30px] tracking-[-0.3px]">Sel: 0</span>
        <Ic size={11}><rect x="3" y="1" width="12" height="12" fill="#cfe0f4" stroke="#234" /><path d="M3 3h12" stroke="#2a5b9c" strokeWidth="3" /><rect x="0" y="8" width="8" height="7" fill="#4b80c0" /></Ic>
        <div className="ml-[4px] flex h-[14px] w-[52px] items-center justify-center rounded-[2px] border border-[#bab7b0] bg-[#faf9f6]">full</div>
        <div className="ml-[4px] flex gap-[6px]">
          <Ic size={11} dim><path d={undoPath} fill="#8fb0d8" stroke="#44648c" /><path d="M0 1h16M0 15h16" stroke="#e44" strokeDasharray="2 2" /></Ic>
          <Ic size={11} dim><path d={undoPath} transform="scale(-1,1) translate(-16,0)" fill="#8fb0d8" stroke="#44648c" /><path d="M0 1h16M0 15h16" stroke="#e44" strokeDasharray="2 2" /></Ic>
        </div>
        <div className="ml-[16px] flex items-center gap-[4px]">
          <Ic size={12}><path d="M2 10l7-3 6 4-7 4z" fill="#222" /><path d="M1 4l6-3 4 4v5l-6-1z" fill="#4a7fc2" stroke="#1d3a62" /></Ic>
          <svg width="5" height="3"><path d="M0 0h5L2.500 3z" fill="#555" /></svg>
        </div>
        <div className="ml-[2px] flex h-[15px] w-[33px] items-center gap-[6px] rounded-[2px] border border-[#bab7b0] bg-[#faf9f6] pl-[3px]">
          <span className="flex h-[12px] w-[13px] items-center justify-center bg-[#241010]"><span className="h-[10px] w-[11px] border-2 border-[#9a4a3c] bg-black" /></span>
          <svg width="5" height="3"><path d="M0 0h5L2.500 3z" fill="#555" /></svg>
        </div>
        <span className="ml-[12px] text-[11px]">»</span>
      </div>
      <div className="flex h-[22px] shrink-0 items-center justify-end border-b border-[#b9b6af] pr-[2px]">
        <div className="flex h-[16px] w-[18px] items-center justify-center rounded-[2px] border border-[#bab7b0] bg-[#faf9f6]">
          <Ic size={12}><circle cx="8" cy="8" r="7" fill="#a5d070" stroke="#555" /><path d="M5.500 6c.5-3 5-2.500 4.800 0C10 8 8 7.500 8 10M8 11v2" fill="none" stroke="#213a08" strokeWidth="1.600" /></Ic>
        </div>
        <div className="flex h-[16px] w-[15px] items-center justify-center rounded-[2px] border border-[#bab7b0] bg-[#faf9f6]">
          <Ic size={12}><rect x="6" y="3" width="9" height="12" fill="#e9eef6" stroke="#445" /><path d="M0 2v6h6L4 6c3-2 6-1 6 3h2c1-6-5-8-9-5z" fill="#4b80c0" stroke="#1f416e" /></Ic>
        </div>
        <div className="flex h-[16px] w-[8px] items-center justify-center rounded-[2px] border border-[#bab7b0] bg-[#faf9f6]"><svg width="5" height="3"><path d="M0 0h5L2.500 3z" fill="#555" /></svg></div>
      </div>
      <div className="flex h-[448px] shrink-0">
        <MiniCanvas />
        <div className="flex flex-1 flex-col pl-[5px]">
          <div className="flex h-[13px] items-center pt-px pr-px pl-px">
            Property Editor
            <svg width="17" height="8" fill="none" stroke="#666" strokeWidth=".9" className="ml-auto"><rect x=".5" y=".5" width="7" height="7" rx="1.500" /><circle cx="4" cy="4" r="1.500" /><rect x="9.500" y=".5" width="7" height="7" rx="1.500" /><path d="M11.500 2.500l3 3M14.500 2.500l-3 3" /></svg>
          </div>
          <div className="flex h-[25px] items-center">
            <div className="flex flex-1 items-center gap-[11px] pl-[7px]">
              <Ic size={12} dim><path d="M10 2v12L4 8z" fill="#8fb0d8" stroke="#667" /></Ic>
              <Ic size={12} dim><path d="M5 2v12l6-6z" fill="#8fb0d8" stroke="#667" /></Ic>
              <Ic size={12} dim><path d="M3 9l3 4 6-10" fill="none" stroke="#7a9a20" strokeWidth="2.200" /></Ic>
              <svg width="5" height="3" className="-mr-[3px] -ml-[3px]"><path d="M0 0h5L2.500 3z" fill="#777" /></svg>
              <Ic size={12} dim><path d="M0 2l7 8M7 2L0 10" stroke="#e22" strokeWidth="1.800" /><path d="M14 1L7 14" stroke="#a67b3a" strokeWidth="2.800" /></Ic>
              <Ic size={12} dim><rect x="6" y="4" width="9" height="11" fill="#e4e4e4" stroke="#556" /><path d="M0 2v6h6L4 6c3-2 6-1 6 3h2c1-6-5-8-9-5z" fill="#a9bdd8" stroke="#567" /></Ic>
              <Ic size={13}><circle cx="8" cy="9" r="4" fill="#c9c6c0" /><path d="M1 6V3h3M12 3h3v3M15 12v3h-3M4 15H1v-3M8 0v4M6 2h4" fill="none" stroke="#df5a50" strokeWidth="1.400" /></Ic>
            </div>
            <div className="mr-px flex h-[25px] w-[14px] flex-col items-center justify-center rounded-[2px] border border-[#bab7b0] bg-[#faf9f6]">
              <Ic size={11}><circle cx="8" cy="8" r="6.500" fill="#bbb" stroke="#555" /><path d="M7 3l5 5-5 5z" fill="#111" /></Ic>
              <svg width="5" height="3" className="mt-[4px] ml-[5px]"><path d="M0 0h5L2.500 3z" fill="#555" /></svg>
            </div>
          </div>
          <div className="flex h-[17px] w-[42px] shrink-0 items-center justify-center rounded-t-[2px] border border-b-0 border-[#c5c2bb] bg-[#f9f8f5] pt-px">Design</div>
          <div className="flex h-[14px] shrink-0 items-center gap-[3px] border-t border-[#c5c2bb] pl-[7px]">
            <svg width="9" height="6"><path d="M0 0h9L4.500 6z" fill="#6f8cb4" /></svg>
            <span className="tracking-[-0.3px]">Attributes</span>
            <span className="mr-[3px] h-px flex-1 bg-[#c9c6bf]" />
          </div>
          <div className="mr-[4px] ml-px flex h-[15px] shrink-0 border border-[#c5c2bb] pt-px">
            <div className="flex w-[91px] items-center justify-center border-r border-[#c5c2bb]">Prompt</div>
            <div className="flex flex-1 items-center justify-center">Value</div>
          </div>
        </div>
      </div>
    </div>
  );
}

function Wallpaper() {
  return (
    <svg width="558" height="659" viewBox="0 0 558 659" className="block">
      <defs>
        <linearGradient id="sky" x1="0" y1="0" x2="0.2" y2="1">
          <stop offset="0" stopColor="#78afd2" />
          <stop offset="0.35" stopColor="#84adcb" />
          <stop offset="1" stopColor="#8da4bb" />
        </linearGradient>
        <linearGradient id="petalA" x1="0" y1="0" x2="1" y2="1">
          <stop offset="0" stopColor="#0a5ff0" />
          <stop offset="0.5" stopColor="#0239c4" />
          <stop offset="1" stopColor="#011a70" />
        </linearGradient>
        <linearGradient id="petalB" x1="0" y1="0" x2="1" y2="0.6">
          <stop offset="0" stopColor="#011048" />
          <stop offset="0.45" stopColor="#0440cf" />
          <stop offset="1" stopColor="#010f4e" />
        </linearGradient>
        <linearGradient id="petalC" x1="0" y1="0" x2="1" y2="0">
          <stop offset="0" stopColor="#0233b0" />
          <stop offset="0.6" stopColor="#0a5be8" />
          <stop offset="1" stopColor="#021a6a" />
        </linearGradient>
      </defs>
      <rect width="558" height="659" fill="url(#sky)" />
      <path d="M0 570H290L332 613C320 622 308 638 302 659H0z" fill="#02144f" />
      <path d="M0 574C60 580 110 610 150 659H0z" fill="url(#petalA)" />
      <path d="M0 590C35 597 66 624 84 659H60C48 634 24 612 0 606z" fill="#0d6cf4" />
      <path d="M0 622C22 624 36 640 42 659H0z" fill="#011a72" />
      <path d="M88 606C130 608 178 628 200 659H158C142 635 116 614 88 606z" fill="url(#petalC)" />
      <path d="M140 606C190 602 222 632 232 659H204C190 635 166 614 140 606z" fill="#010d3e" />
      <path d="M196 659C204 634 238 612 310 606L332 613C320 622 308 638 302 659z" fill="url(#petalB)" />
      <path d="M240 659C250 636 278 620 326 616C316 626 306 642 302 659z" fill="#0338b4" />
      <path d="M266 659C278 640 296 628 320 621C312 630 305 644 302 659z" fill="#02207c" />
    </svg>
  );
}

export default function App() {
  return (
    <main className="flex h-[659px] w-[1454px] overflow-hidden bg-black font-['DejaVu_Sans',sans-serif] leading-none">
      <section className="relative w-[578px] shrink-0 bg-[linear-gradient(90deg,#15171a_0,#15171a_572px,#45484c_573px,#45484c_575px,#0c0d10_576px,#0c0d10_578px)]">
        <Wallpaper />
        <BackWindow />
        <Dialog />
      </section>
      <Editor />
    </main>
  );
}
